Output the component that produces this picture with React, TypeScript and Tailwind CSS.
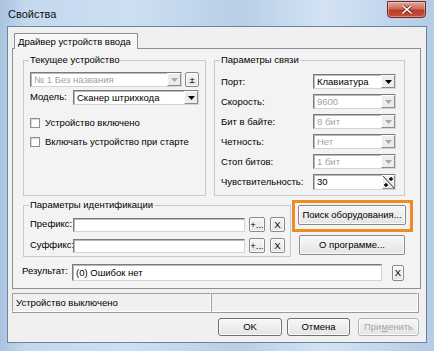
import React from 'react';

const sunken = 'border border-t-[#7a7a7a] border-l-[#7a7a7a] border-b-[#d4d4d4] border-r-[#d4d4d4] shadow-[inset_1px_1px_0_#b9b9b9]';

const Arrow: React.FC<{ disabled?: boolean }> = ({ disabled }) => (
    <div className="w-[14px] h-full flex items-center justify-center border border-t-white border-l-white border-b-[#8d8d8d] border-r-[#8d8d8d] bg-[#ececec]">
        <svg width="7" height="4" viewBox="0 0 7 4">
            <path d="M0 0H7L3.5 4Z" fill={disabled ? '#a9a9a9' : '#000'} />
        </svg>
    </div>
);

const Combo: React.FC<{ text: string; disabled?: boolean; className?: string }> = ({ text, disabled, className }) => (
    <div className={`flex h-[15px] bg-white ${sunken} ${className ?? ''}`}>
        <span className={`flex-1 pl-[3px] text-[9.5px] leading-[13px] ${disabled ? 'text-[#a3a3a3]' : 'text-black'}`}>{text}</span>
        <Arrow disabled={disabled} />
    </div>
);

const Btn: React.FC<{ children: React.ReactNode; className?: string; disabled?: boolean }> = ({ children, className, disabled }) => (
    <div className={`flex items-center justify-center border border-[#8a8a8a] rounded-[2px] bg-[linear-gradient(#f7f7f7,#e4e4e4)] shadow-[inset_0_0_0_1px_#fbfbfb] text-[9.5px] leading-none ${disabled ? 'text-[#a6a6a6]' : 'text-black'} ${className ?? ''}`}>
        {children}
    </div>
);

const Check: React.FC<{ label: string }> = ({ label }) => (
    <div className="flex items-center gap-[5px] h-[10px]">
        <div className="w-[10px] h-[10px] bg-white border border-[#8e8f8f] shadow-[inset_1px_1px_0_#d8d8d8]" />
        <span className="text-[9.5px] leading-none">{label}</span>
    </div>
);

const Row: React.FC<{ label: string; children: React.ReactNode }> = ({ label, children }) => (
    <>
        <span className="text-[9.5px] leading-[15px]">{label}</span>
        {children}
    </>
);

export default function App() {
    return (
        <div className="w-[434px] h-[351px] flex flex-col bg-[linear-gradient(90deg,#a9c3df_0%,#c4d8ee_6%,#cddff2_30%,#b9cfe7_55%,#d3e3f4_75%,#b4cbe5_100%)] font-['Liberation_Sans',Arial,sans-serif] text-black overflow-hidden">
            {/* заголовок окна */}
            <div className="h-[26px] flex items-start justify-between">
                <span className="pl-[8px] pt-[8px] text-[11px] leading-[12px] text-[#111]">Свойства</span>
                <div className="mr-[8px] mt-[1px] w-[39px] h-[17px] rounded-b-[4px] border border-[#6e2a22] bg-[linear-gradient(#e9a898,#d06a58_45%,#b83c2c_55%,#c9503c)] flex items-center justify-center shadow-[inset_0_0_0_1px_rgba(255,255,255,0.35)]">
                    <svg width="10" height="9" viewBox="0 0 10 9">
                        <path d="M1 1L9 8M9 1L1 8" stroke="#5a1c14" strokeWidth="3" strokeLinecap="square" />
                        <path d="M1 1L9 8M9 1L1 8" stroke="#fff" strokeWidth="1.6" strokeLinecap="square" />
                    </svg>
                </div>
            </div>

            {/* клиентская область */}
            <div className="mx-[7px] h-[317px] border border-[#6b83a0] bg-[#f0f0f0] flex flex-col pl-[4px] pr-[5px] pt-[6px]">
                <div className="ml-[2px] w-[124px] h-[16px] -mb-px z-10 border border-b-0 border-[#8c8f96] bg-[#f7f7f7] pl-[3px] text-[9.5px] leading-[15px]">
                    Драйвер устройств ввода
                </div>
                <div className="h-[241px] border border-[#8c8f96] bg-[#f3f3f3] flex flex-col pl-[10px] pt-[5px]">
                    <div className="flex gap-[8px]">
                        <fieldset className="w-[183px] h-[142px] border border-[#c5cace] pl-[6px] pt-[6px]">
                            <legend className="-ml-[1px] px-[1px] text-[9.5px] leading-[12px]">Текущее устройство</legend>
                            <div className="flex gap-[3px]">
                                <Combo text="№ 1 Без названия" disabled className="w-[152px]" />
                                <Btn className="w-[14px] h-[15px]">±</Btn>
                            </div>
                            <div className="flex items-center mt-[3px]">
                                <span className="w-[43px] text-[9.5px]">Модель:</span>
                                <Combo text="Сканер штрихкода" className="w-[126px]" />
                            </div>
                            <div className="flex flex-col gap-[9px] mt-[13px]">
                                <Check label="Устройство включено" />
                                <Check label="Включать устройство при старте" />
                            </div>
                        </fieldset>
                        <fieldset className="w-[191px] h-[142px] border border-[#c5cace] pl-[6px] pt-[8px]">
                            <legend className="-ml-[1px] px-[1px] text-[9.5px] leading-[12px]">Параметры связи</legend>
                            <div className="grid grid-cols-[92px_83px] gap-y-[5px]">
                                <Row label="Порт:"><Combo text="Клавиатура" /></Row>
                                <Row label="Скорость:"><Combo text="9600" disabled /></Row>
                                <Row label="Бит в байте:"><Combo text="8 бит" disabled /></Row>
                                <Row label="Четность:"><Combo text="Нет" disabled /></Row>
                                <Row label="Стоп битов:"><Combo text="1 бит" disabled /></Row>
                                <Row label="Чувствительность:">
                                    <div className={`flex h-[16px] bg-white ${sunken}`}>
                                        <span className="flex-1 pl-[3px] text-[9.5px] leading-[14px]">30</span>
                                        <div className="w-[13px] h-full border border-t-white border-l-white border-b-[#8d8d8d] border-r-[#8d8d8d] bg-[#ececec]">
                                            <svg width="11" height="12" viewBox="0 0 11 12">
                                                <path d="M0 0L11 12" stroke="#333" strokeWidth="1" />
                                                <path d="M6 3H10M8 1V5" stroke="#000" strokeWidth="1.3" />
                                                <path d="M1 9H5M3 7V11" stroke="#000" strokeWidth="1.3" />
                                            </svg>
                                        </div>
                                    </div>
                                </Row>
                            </div>
                        </fieldset>
                    </div>

                    <div className="flex mt-[3px]">
                        <fieldset className="w-[268px] h-[58px] border border-[#c5cace] pl-[6px] pt-[6px]">
                            <legend className="-ml-[1px] px-[1px] text-[9.5px] leading-[12px]">Параметры идентификации</legend>
                            <div className="flex flex-col gap-[6px]">
                                {['Префикс:', 'Суффикс:'].map((l) => (
                                    <div key={l} className="flex items-center">
                                        <span className="w-[43px] text-[9.5px]">{l}</span>
                                        <div className={`w-[172px] h-[14px] bg-white ${sunken}`} />
                                        <Btn className="ml-[4px] w-[16px] h-[15px]">+...</Btn>
                                        <Btn className="ml-[5px] w-[15px] h-[15px]">X</Btn>
                                    </div>
                                ))}
                            </div>
                        </fieldset>
                        <div className="flex flex-col ml-[1px] pt-[1px]">
                            <div className="w-[121px] h-[32px] border-[3px] border-[#f08a24] p-[2px] pl-[3px]">
                                <Btn className="w-[108px] h-[20px]">Поиск оборудования...</Btn>
                            </div>
                            <Btn className="ml-[7px] mt-[3px] w-[106px] h-[20px]">О программе...</Btn>
                        </div>
                    </div>

                    <div className="flex items-center mt-[7px]">
                        <span className="w-[50px] -ml-[1px] pb-[3px] text-[9.5px]">Результат:</span>
                        <div className={`w-[310px] h-[17px] bg-white ${sunken} pl-[3px] text-[9.5px] leading-[15px]`}>(0) Ошибок нет</div>
                        <Btn className="ml-[10px] w-[12px] h-[16px]">X</Btn>
                    </div>
                </div>

                {/* строка состояния */}
                <div className="mt-[4px] w-[407px] h-[20px] flex border-b border-r border-[#9a9a9a]">
                    <div className="w-[199px] h-full border border-t-[#a0a0a0] border-l-[#a0a0a0] border-b-white border-r-white pl-[3px] text-[9.5px] leading-[17px]">Устройство выключено</div>
                    <div className="flex-1 h-full border border-t-[#a0a0a0] border-l-[#a0a0a0] border-b-white border-r-white" />
                </div>

                <div className="flex justify-end gap-[5px] mt-[5px] pr-[2px]">
                    <Btn className="w-[64px] h-[18px] rounded-[3px] border-[#707070]">OK</Btn>
                    <Btn className="w-[63px] h-[18px] rounded-[3px] border-[#707070]">Отмена</Btn>
                    <Btn disabled className="ml-[3px] w-[61px] h-[18px] rounded-[3px] border-[#adb2b5]">
                        При<span className="underline">м</span>енить
                    </Btn>
                </div>
            </div>
        </div>
    );
}
